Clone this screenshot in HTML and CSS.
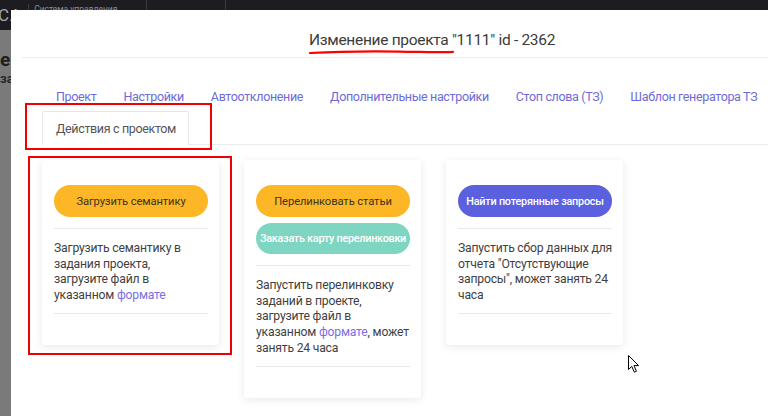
FILE: index.html
```html
<!DOCTYPE html>
<html lang="ru">
<head>
<meta charset="utf-8">
<title>Изменение проекта</title>
<link rel="stylesheet" href="styles.css">
</head>
<body>
<header class="topbar">
  <div class="logo">CA</div>
  <div class="brand-sub">Система управления<br>проектами</div>
  <nav class="topnav">
    <span class="topnav-item active">Проекты</span>
    <span class="topnav-item">Задачи ▾</span>
    <span class="topnav-item">Настройки ▾</span>
    <span class="topnav-item">Отчёты ▾</span>
    <span class="topnav-item">Документация</span>
    <span class="topnav-item">Статистика ▾</span>
    <span class="topnav-item">Поддержка</span>
  </nav>
  <div class="balance">216 ₽</div>
</header>

<div class="page">
  <div class="page-title">ек</div>
  <div class="page-sub">за</div>
</div>

<div class="modal">
  <div class="modal-header">
    <h2 class="modal-title">Изменение проекта "1111" id - 2362</h2>
  </div>
  <div class="modal-body">
    <ul class="tabs">
      <li class="tab">Проект</li>
      <li class="tab">Настройки</li>
      <li class="tab">Автоотклонение</li>
      <li class="tab">Дополнительные настройки</li>
      <li class="tab">Стоп слова (ТЗ)</li>
      <li class="tab">Шаблон генератора ТЗ</li>
      <li class="tab tab-active">Действия с проектом</li>
    </ul>
    <div class="cards">
      <div class="card">
        <button class="btn btn-amber">Загрузить семантику</button>
        <hr class="sep">
        <p class="card-text">Загрузить семантику в задания проекта, загрузите&nbsp;файл в указанном <a class="link">формате</a></p>
        <hr class="sep">
      </div>
      <div class="card">
        <button class="btn btn-amber">Перелинковать статьи</button>
        <button class="btn btn-teal">Заказать карту перелинковки</button>
        <hr class="sep">
        <p class="card-text">Запустить перелинковку заданий в проекте, загрузите&nbsp;файл в указанном <a class="link">формате</a>, может занять 24 часа</p>
        <hr class="sep">
      </div>
      <div class="card">
        <button class="btn btn-purple">Найти потерянные запросы</button>
        <hr class="sep">
        <p class="card-text">Запустить сбор данных для отчета "Отсутствующие запросы", может занять 24 часа</p>
        <hr class="sep">
      </div>
    </div>
  </div>

  <svg class="mark-underline" width="146" height="8" viewBox="0 0 146 8">
    <path d="M1 5 C 30 3.5, 60 3.2, 90 3.6 S 130 4.5, 144 3.8" fill="none" stroke="#f00" stroke-width="2.2" stroke-linecap="round"/>
  </svg>
  <div class="mark mark-tab"></div>
  <div class="mark mark-card"></div>
</div>

<svg class="cursor" width="12" height="19" viewBox="0 0 12 19">
  <path d="M0.5 0.5 L0.5 14.5 L3.8 11.4 L6.3 17.2 L8.4 16.3 L6 10.6 L10.6 10.6 Z" fill="#fff" stroke="#000" stroke-width="1" stroke-linejoin="round"/>
</svg>
</body>
</html>
```

FILE: styles.css
```css
* { box-sizing: border-box; }

html, body {
  margin: 0;
  padding: 0;
  width: 768px;
  height: 416px;
  overflow: hidden;
}

body {
  background: #7a7a7a;
  font-family: Roboto, "Noto Sans", Arial, sans-serif;
  position: relative;
}

/* background page (under overlay) */
.topbar {
  height: 30px;
  background: #1c1c21;
  display: flex;
  align-items: stretch;
  color: #8a8a8e;
}

.logo {
  width: 33px;
  padding-top: 2px;
  font-size: 17px;
  letter-spacing: 1px;
  color: #a9a9ad;
  border-right: 1px solid #3c3c42;
  margin: 4px 0 8px;
  line-height: 18px;
  text-indent: -2px;
  overflow: hidden;
  white-space: nowrap;
}

.brand-sub {
  width: 132px;
  padding: 4px 0 0 5px;
  font-size: 8.5px;
  line-height: 10px;
  color: #8e8e93;
}

.topnav {
  display: flex;
}

.topnav-item {
  padding: 9px 11px 0;
  font-size: 11.5px;
  color: #6e6e74;
  white-space: nowrap;
}

.topnav-item.active {
  width: 80px;
  border-left: 1px solid #3a3a40;
  border-right: 1px solid #3a3a40;
  padding: 8px 12px 0;
  font-weight: bold;
  font-size: 12.5px;
  color: #b4b4b8;
  margin-right: 12px;
}

.balance {
  margin-left: auto;
  padding: 9px 0 0;
  font-size: 11.5px;
  color: #b4b4b8;
  width: 24px;
  overflow: hidden;
  white-space: nowrap;
}

.page {
  padding: 19px 0 0 0;
}

.page-title {
  font-size: 19px;
  font-weight: bold;
  color: #1e1e1e;
  line-height: 22px;
}

.page-sub {
  font-size: 13px;
  font-weight: bold;
  color: #262626;
  line-height: 16px;
}

/* modal */
.modal {
  position: absolute;
  left: 11px;
  top: 10px;
  width: 842px;
  height: 406px;
  background: #fff;
}

.modal-header {
  margin: 0 11px;
  padding: 19px 0 6px;
  border-bottom: 1px solid #ececec;
}

.modal-title {
  margin: 0;
  text-align: center;
  font-size: 15.5px;
  letter-spacing: -0.3px;
  font-weight: normal;
  line-height: 22px;
  color: #3b3b3b;
}

.modal-body {
  padding: 21px 0 0 31px;
}

.tabs {
  list-style: none;
  margin: 0;
  padding: 0;
  display: flex;
  flex-wrap: wrap;
  width: 790px;
  border-bottom: 1px solid #ebebeb;
}

.tab {
  padding: 0 12.5px;
  height: 33px;
  line-height: 33px;
  font-size: 12.5px;
  letter-spacing: -0.35px;
  color: #6d6bd9;
  border: 1px solid transparent;
  border-bottom: 0;
  white-space: nowrap;
}

.tab:first-child {
  padding-left: 13px;
}

.tab-active {
  margin-top: -1px;
  height: 34px;
  border-color: #e6e6e6;
  border-radius: 2px 2px 0 0;
  color: #555;
  margin-bottom: -1px;
  background: #fff;
  padding: 0 12px 0 13px;
}

.cards {
  display: flex;
  align-items: flex-start;
  gap: 25px;
  margin-top: 15px;
}

.card {
  width: 177px;
  padding: 25px 11px 31px 12px;
  background: #fff;
  border-radius: 3px;
  box-shadow: 0 2px 9px rgba(0, 0, 0, 0.09);
  display: flex;
  flex-direction: column;
}

.btn {
  display: block;
  width: 100%;
  height: 32px;
  border: 0;
  border-radius: 16px;
  font-family: inherit;
  font-size: 11.2px;
  letter-spacing: -0.1px;
  padding: 0;
  white-space: nowrap;
}

.btn + .btn {
  margin-top: 6px;
  height: 31px;
}

.btn-amber {
  background: #fdb726;
  color: #3a3320;
}

.btn-teal {
  background: #7ed5c1;
  color: #fff;
  font-weight: 500;
  font-size: 10.8px;
  letter-spacing: -0.25px;
}

.btn-purple {
  background: #5b60df;
  color: #fff;
  font-weight: 500;
  font-size: 10.8px;
  letter-spacing: -0.2px;
}

.sep {
  margin: 11px 0 0;
  border: 0;
  border-top: 1px solid #e9e9ec;
  height: 0;
}

.card-text {
  margin: 12px 0 9px;
  font-size: 12.2px;
  letter-spacing: -0.2px;
  line-height: 15.7px;
  color: #3f3f44;
}

.card-text + .sep {
  margin-top: 0;
}

.link {
  color: #7a6fe6;
}

/* annotations */
.mark {
  position: absolute;
  border: 2px solid #f20000;
}

.mark-tab {
  left: 14px;
  top: 93px;
  width: 187px;
  height: 47px;
}

.mark-card {
  left: 17px;
  top: 146px;
  width: 204px;
  height: 199px;
}

.mark-underline {
  position: absolute;
  left: 298px;
  top: 38px;
}

.cursor {
  position: absolute;
  left: 628px;
  top: 355px;
}
```
